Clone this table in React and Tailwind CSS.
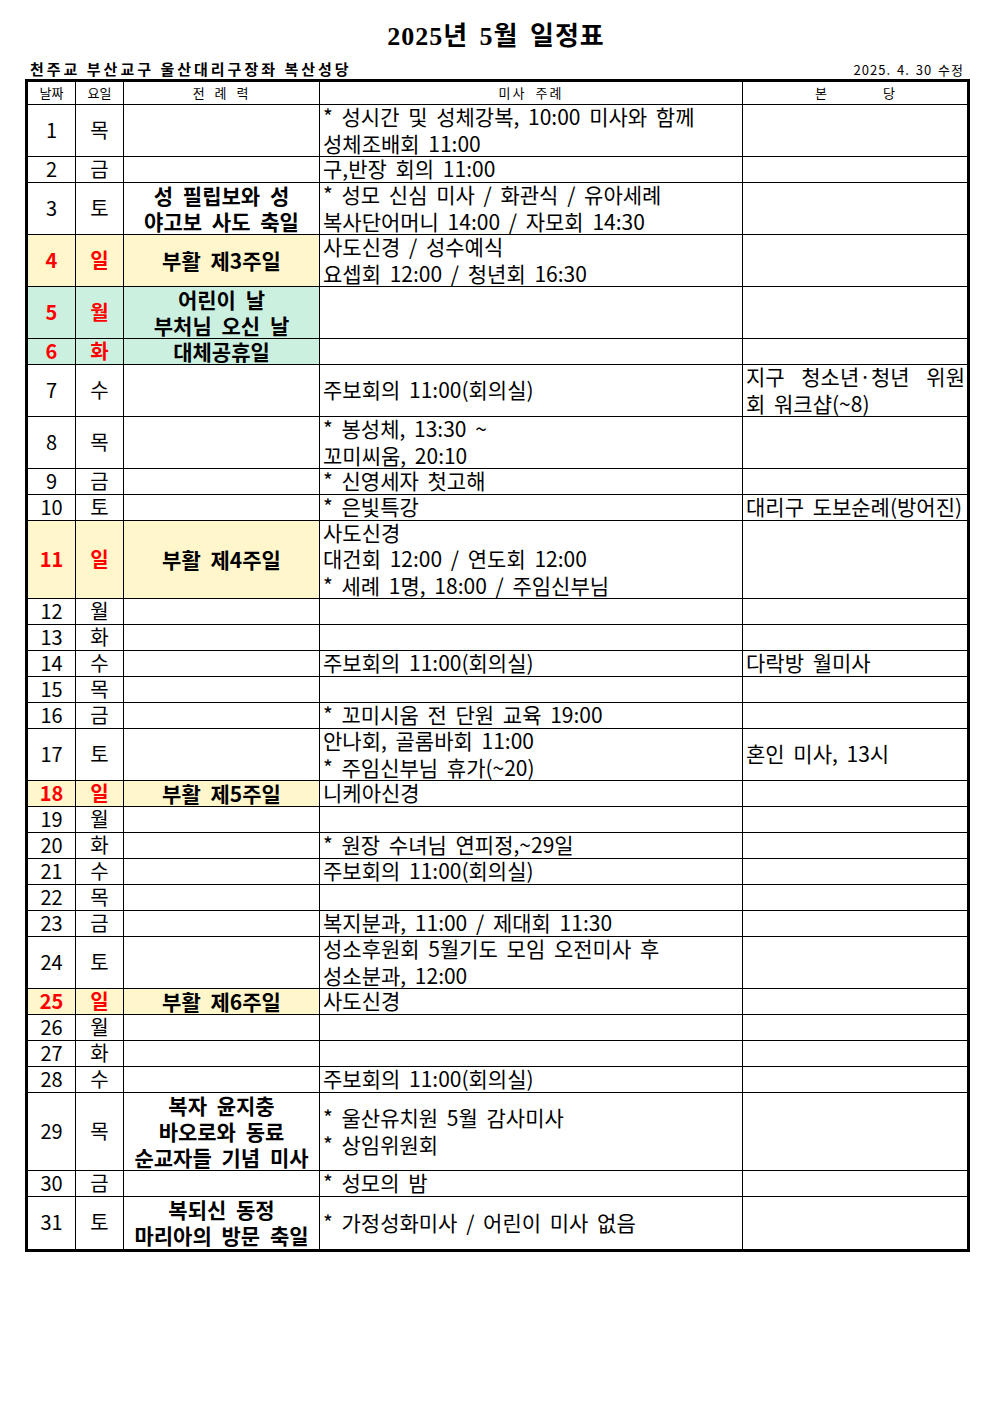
import React from "react";

const rows = [
  { d: 1, w: "목", u: 2, mass: ["* 성시간 및 성체강복, 10:00 미사와 함께", "성체조배회 11:00"] },
  { d: 2, w: "금", u: 1, mass: ["구,반장 회의 11:00"] },
  { d: 3, w: "토", u: 2, lit: ["성 필립보와 성", "야고보 사도 축일"], mass: ["* 성모 신심 미사 / 화관식 / 유아세례", "복사단어머니 14:00 / 자모회 14:30"] },
  { d: 4, w: "일", u: 2, red: true, bg: "y", lit: ["부활 제3주일"], mass: ["사도신경 / 성수예식", "요셉회 12:00 / 청년회 16:30"] },
  { d: 5, w: "월", u: 2, red: true, bg: "g", lit: ["어린이 날", "부처님 오신 날"] },
  { d: 6, w: "화", u: 1, red: true, bg: "g", lit: ["대체공휴일"] },
  { d: 7, w: "수", u: 2, mass: ["주보회의 11:00(회의실)"], special: true },
  { d: 8, w: "목", u: 2, mass: ["* 봉성체, 13:30 ~", "꼬미씨움, 20:10"] },
  { d: 9, w: "금", u: 1, mass: ["* 신영세자 첫고해"] },
  { d: 10, w: "토", u: 1, mass: ["* 은빛특강"], parish: ["대리구 도보순례(방어진)"] },
  { d: 11, w: "일", u: 3, red: true, bg: "y", lit: ["부활 제4주일"], mass: ["사도신경", "대건회 12:00 / 연도회 12:00", "* 세례 1명, 18:00 / 주임신부님"] },
  { d: 12, w: "월", u: 1 },
  { d: 13, w: "화", u: 1 },
  { d: 14, w: "수", u: 1, mass: ["주보회의 11:00(회의실)"], parish: ["다락방 월미사"] },
  { d: 15, w: "목", u: 1 },
  { d: 16, w: "금", u: 1, mass: ["* 꼬미시움 전 단원 교육 19:00"] },
  { d: 17, w: "토", u: 2, mass: ["안나회, 골롬바회 11:00", "* 주임신부님 휴가(~20)"], parish: ["혼인 미사, 13시"] },
  { d: 18, w: "일", u: 1, red: true, bg: "y", lit: ["부활 제5주일"], mass: ["니케아신경"] },
  { d: 19, w: "월", u: 1 },
  { d: 20, w: "화", u: 1, mass: ["* 원장 수녀님 연피정,~29일"] },
  { d: 21, w: "수", u: 1, mass: ["주보회의 11:00(회의실)"] },
  { d: 22, w: "목", u: 1 },
  { d: 23, w: "금", u: 1, mass: ["복지분과, 11:00 / 제대회 11:30"] },
  { d: 24, w: "토", u: 2, mass: ["성소후원회 5월기도 모임 오전미사 후", "성소분과, 12:00"] },
  { d: 25, w: "일", u: 1, red: true, bg: "y", lit: ["부활 제6주일"], mass: ["사도신경"] },
  { d: 26, w: "월", u: 1 },
  { d: 27, w: "화", u: 1 },
  { d: 28, w: "수", u: 1, mass: ["주보회의 11:00(회의실)"] },
  { d: 29, w: "목", u: 3, lit: ["복자 윤지충", "바오로와 동료", "순교자들 기념 미사"], mass: ["* 울산유치원 5월 감사미사", "* 상임위원회"] },
  { d: 30, w: "금", u: 1, mass: ["* 성모의 밤"] },
  { d: 31, w: "토", u: 2, lit: ["복되신 동정", "마리아의 방문 축일"], mass: ["* 가정성화미사 / 어린이 미사 없음"] },
];

const heights = { 1: "h-[26px]", 2: "h-[52px]", 3: "h-[78px]" };

function Row({ r, last }) {
  const bg = r.bg === "y" ? "bg-[#fff6cc]" : r.bg === "g" ? "bg-[#ccf0e0]" : "";
  const dayText = r.red ? "text-[#ff0000] font-bold" : "text-black";
  return (
    <div className={`flex ${heights[r.u]} ${last ? "" : "border-b border-black"}`}>
      <div className={`w-[48px] shrink-0 border-r border-black flex items-center justify-center pb-[2px] text-[20px] leading-[26px] ${bg} ${dayText}`}>
        {r.d}
      </div>
      <div className={`w-[48px] shrink-0 border-r border-black flex items-center justify-center pb-[2px] text-[20px] leading-[26px] ${bg} ${dayText}`}>
        {r.w}
      </div>
      <div className={`w-[196px] shrink-0 border-r border-black flex flex-col items-center justify-center pb-[2px] text-[21px] font-bold leading-[26px] [word-spacing:5px] ${bg}`}>
        {(r.lit || []).map((t, i) => (
          <div key={i} className="whitespace-nowrap">{t}</div>
        ))}
      </div>
      <div className="w-[423px] shrink-0 border-r border-black flex flex-col justify-center pl-[3px] pb-[2px] text-[21px] leading-[26.5px] [word-spacing:4px]">
        {(r.mass || []).map((t, i) => (
          <div key={i} className="whitespace-nowrap">{t}</div>
        ))}
      </div>
      <div className="w-[224px] shrink-0 flex flex-col justify-center pl-[3px] pr-[2px] pb-[2px] text-[21px] leading-[26.5px] [word-spacing:4px]">
        {r.special ? (
          <>
            <div className="flex justify-between whitespace-nowrap">
              <span>지구</span>
              <span>청소년·청년</span>
              <span>위원</span>
            </div>
            <div className="whitespace-nowrap">회 워크샵(~8)</div>
          </>
        ) : (
          (r.parish || []).map((t, i) => (
            <div key={i} className="whitespace-nowrap">{t}</div>
          ))
        )}
      </div>
    </div>
  );
}

export default function App() {
  return (
    <div
      className="w-[992px] h-[1403px] bg-white text-black pt-[18px] px-[22px]"
      style={{ fontFamily: '"Noto Sans CJK KR", "Noto Sans", sans-serif' }}
    >
      <div
        className="h-[36px] flex items-center justify-center text-[26px] font-bold tracking-[1px] [word-spacing:4px]"
        style={{ fontFamily: '"Liberation Serif", "Noto Sans CJK KR", serif' }}
      >
        2025년 5월 일정표
      </div>
      <div className="h-[25px] flex items-end justify-between pb-[2px] pl-[8px] pr-[6px]">
        <div className="text-[15px] font-bold tracking-[3px] leading-[17px]">천주교 부산교구 울산대리구장좌 복산성당</div>
        <div className="text-[13px] tracking-[1px] leading-[15px] [word-spacing:2px]">2025. 4. 30 수정</div>
      </div>
      <div className="ml-[3px] w-[945px] border-[3px] border-black">
        <div className="flex h-[23px] border-b border-black text-[13px] leading-[20px]">
          <div className="w-[48px] shrink-0 border-r border-black flex items-center justify-center">날짜</div>
          <div className="w-[48px] shrink-0 border-r border-black flex items-center justify-center">요일</div>
          <div className="w-[196px] shrink-0 border-r border-black flex items-center justify-center tracking-[2px] [word-spacing:3px]">전 례 력</div>
          <div className="w-[423px] shrink-0 border-r border-black flex items-center justify-center tracking-[2px] [word-spacing:4px]">미사 주례</div>
          <div className="w-[224px] shrink-0 flex items-center justify-center gap-[56px]">
            <span>본</span>
            <span>당</span>
          </div>
        </div>
        {rows.map((r, i) => (
          <Row key={r.d} r={r} last={i === rows.length - 1} />
        ))}
      </div>
    </div>
  );
}
